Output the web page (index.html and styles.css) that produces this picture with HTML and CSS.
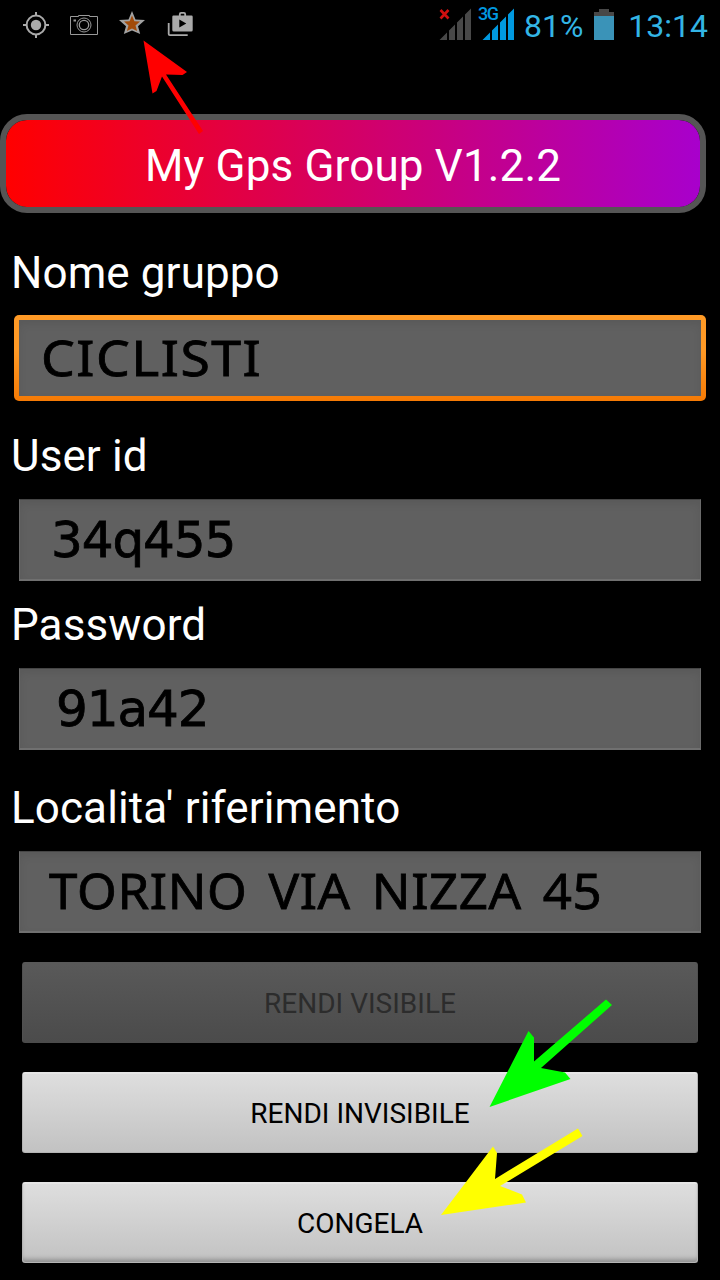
FILE: index.html
```html
<!DOCTYPE html>
<html lang="it">
<head>
    <meta charset="UTF-8">
    <meta name="viewport" content="width=device-width, initial-scale=1.0">
    <title>My Gps Group</title>
    <link rel="stylesheet" href="styles.css">
</head>
<body>
    <div id="screen">
        <div id="status-bar">
            <div class="notifications">
                <svg width="28" height="28" viewBox="0 0 28 28">
                    <circle cx="14" cy="14" r="9.4" fill="none" stroke="#aaa" stroke-width="2"/>
                    <circle cx="14" cy="14" r="5.2" fill="#aaa"/>
                    <path d="M14 1v4M14 23v4M1 14h4M23 14h4" stroke="#aaa" stroke-width="2"/>
                </svg>
                <svg width="28" height="28" viewBox="0 0 28 28">
                    <path d="M.5 5.5h8v-1h11v1h8v18H.5z" fill="none" stroke="#999" stroke-width="1"/>
                    <circle cx="14" cy="14" r="7" fill="none" stroke="#999" stroke-width="1"/>
                    <circle cx="14" cy="14" r="4.7" fill="none" stroke="#999" stroke-width="1.3"/>
                    <path d="M3.5 9.5H6" stroke="#999" stroke-width="2"/>
                </svg>
                <svg width="28" height="28" viewBox="0 0 28 28">
                    <path d="M14 0l3.500 8.500 9.500.5-7 6.300 2.200 7.700-8.200-3.500L5.800 23 8 15.300 1 9l9.500-.5z" fill="#a2a2a2"/>
                    <path d="M14 4.500l2.400 5.700 5.600.4-4.500 3.900 1.600 5.500-5.100-2.600L8.900 20l1.600-5.500L6 10.600l5.600-.4z" fill="#a34b09"/>
                </svg>
                <svg width="28" height="28" viewBox="0 0 28 28">
                    <path d="M2.700 12v11q0 1.200 1.200 1.200h17.800" fill="none" stroke="#aaa" stroke-width="1.800"/>
                    <path d="M13.800 5V3.200q0-1.300 1.300-1.300h2.800q1.300 0 1.300 1.300V5" fill="none" stroke="#aaa" stroke-width="1.800"/>
                    <path fill-rule="evenodd" d="M7.500 4.500h18q1.200 0 1.200 1.200v13.300q0 1.500-1.500 1.500H7.800q-1.500 0-1.500-1.500V5.700q0-1.200 1.200-1.200zM13.300 8.500v8l7-4z" fill="#aaa"/>
                </svg>
            </div>
            <div class="indicators">
                <svg class="signal-off" width="34" height="34" viewBox="0 0 34 34">
                    <path d="M.5 33L8 25.500V33zM10 23.500l6-6V33h-6zM18 15.500l6-6V33h-6zM26 7.500l6-6V33h-6z" fill="#484848"/>
                    <path d="M1.500 3l8 8.500M9.500 3l-8 8.500" stroke="#d00f0f" stroke-width="2.600"/>
                </svg>
                <div class="signal">
                    <span>3G</span>
                    <svg width="34" height="34" viewBox="0 0 34 34">
                        <path d="M.5 33L8 25.500V33zM10 23.500l6-6V33h-6zM18 15.500l6-6V33h-6zM26 7.500l6-6V33h-6z" fill="#0099e0"/>
                    </svg>
                </div>
                <span class="percent">81%</span>
                <svg class="battery" width="20" height="31" viewBox="0 0 20 31">
                    <path d="M0 3h5V0h10v3h5v4H0z" fill="#484848"/>
                    <path d="M0 7h20v24H0z" fill="#3a93b8"/>
                </svg>
                <span class="clock">13:14</span>
            </div>
        </div>

        <h1 id="title"><span>My Gps Group V1.2.2</span></h1>

        <div id="form">
            <div class="group name">
                <div class="label">Nome gruppo</div>
                <div class="field focused"><span class="upper">CICLISTI</span></div>
            </div>
            <div class="group user">
                <div class="label">User id</div>
                <div class="field"><span class="code">34q455</span></div>
            </div>
            <div class="group password">
                <div class="label">Password</div>
                <div class="field"><span class="code">91a42</span></div>
            </div>
            <div class="group place">
                <div class="label">Localita' riferimento</div>
                <div class="field"><span class="upper">TORINO VIA NIZZA 45</span></div>
            </div>
        </div>

        <div id="buttons">
            <button disabled>RENDI VISIBILE</button>
            <button>RENDI INVISIBILE</button>
            <button>CONGELA</button>
        </div>

        <svg id="arrows" width="720" height="1280" viewBox="0 0 720 1280">
            <path d="M143.500 40.500L187 72l-4.500 3-16.500-.5L203 131l-4 3-37-57.500-5.500 14.500-4 2.500z" fill="#f00"/>
            <path d="M489.500 1107L528.500 1031l5.500 6.500v24l72-62 6 5.500-71 63 24 4.500 5.500 6.500z" fill="#0f0"/>
            <path d="M441 1215l52-68.500 4 6.500-2 26 83-50.500 4.500 7.500-82.500 50 22 8.500 4 8z" fill="#ff0"/>
        </svg>
    </div>
</body>
</html>
```
FILE: styles.css
```css
* {
    box-sizing: border-box;
    margin: 0;
    padding: 0;
}

body {
    background: #000;
    color: #fff;
    font-family: Roboto, sans-serif;
}

#screen {
    position: relative;
    width: 720px;
    height: 1280px;
    overflow: hidden;
}

#status-bar {
    height: 50px;
    padding: 0 12px 0 22px;
    display: flex;
    align-items: center;
    justify-content: space-between;
}

.notifications {
    display: flex;
    gap: 20px;
}

.indicators {
    display: flex;
    align-items: center;
    color: #33b5e5;
    font-size: 32px;
    line-height: 50px;
}

.indicators svg {
    display: block;
}

.signal-off,
.signal svg {
    margin-bottom: 3px;
}

.signal {
    position: relative;
    margin-left: 9px;
}

.signal span {
    position: absolute;
    left: -4px;
    top: -2px;
    font-size: 18px;
    font-weight: 500;
    line-height: 18px;
    letter-spacing: -1.5px;
    color: #0099e0;
}

.percent,
.clock {
    padding-top: 1px;
}

.percent {
    margin-left: 8px;
}

.battery {
    margin-left: 11px;
    margin-bottom: 1px;
}

.clock {
    margin-left: 14px;
}

#title {
    width: 706px;
    height: 99px;
    margin-top: 64px;
    border: 6px solid #555;
    border-radius: 27px;
    background: linear-gradient(to right, #f00, #a800cc) padding-box;
    font-size: 44px;
    font-weight: 400;
    line-height: 93px;
    letter-spacing: 0.15px;
    text-align: center;
}

#form {
    padding-top: 34px;
}

.group.user {
    margin-top: 29px;
}

.group.password {
    margin-top: 18px;
}

.group.place {
    margin-top: 32px;
}

.label {
    padding-left: 11px;
    font-size: 44px;
    line-height: 52px;
    letter-spacing: 0.1px;
}

.field {
    width: 682px;
    height: 82px;
    margin: 17px 0 0 19px;
    padding-left: 31px;
    border: 1px solid #6a6a6a;
    border-top-color: #454545;
    border-bottom: 2px solid #707070;
    background: #606060;
    box-shadow: inset 0 4px 8px rgba(0, 0, 0, 0.08);
    color: #000;
    font-size: 50px;
    line-height: 78px;
    white-space: nowrap;
}

.field.focused {
    width: 692px;
    height: 86px;
    margin: 16px 0 0 14px;
    padding-left: 22px;
    border: 5px solid transparent;
    border-radius: 5px;
    background: linear-gradient(#606060, #606060) padding-box, linear-gradient(#ff9a26 40%, #f57a05) border-box;
    line-height: 74px;
}

.field span {
    display: block;
    -webkit-text-stroke: 0.8px #000;
}

/* widened to look like Verdana capitals */
.upper {
    font-family: "Noto Sans", sans-serif;
    transform: scaleX(1.07);
    transform-origin: left;
}

.name .upper {
    letter-spacing: 1.4px;
}

.place .upper {
    transform: scaleX(1.02);
    letter-spacing: 0.6px;
    word-spacing: 7px;
}

.code {
    font-family: "DejaVu Sans", sans-serif;
    line-height: 80px;
    letter-spacing: -1.1px;
}

.password .field {
    padding-left: 36px;
}

.place .field {
    padding-left: 29px;
    line-height: 76px;
}

#buttons {
    padding: 29px 22px 0;
    display: flex;
    flex-direction: column;
    gap: 29px;
}

button {
    height: 81px;
    border: 1px solid #b4b4b4;
    border-top: 2px solid #e6e6e6;
    border-radius: 3px;
    background: linear-gradient(#dedede, #c2c2c2);
    color: #000;
    font-family: Roboto, sans-serif;
    font-size: 28px;
}

button:disabled {
    border-color: #595959 #505050 #4b4b4b;
    background: linear-gradient(#595959, #4b4b4b);
    color: #2c2c2c;
}

button:last-child {
    box-shadow: inset 0 -5px 4px -2px rgba(0, 0, 0, 0.25);
}

#arrows {
    position: absolute;
    left: 0;
    top: 0;
}
```
